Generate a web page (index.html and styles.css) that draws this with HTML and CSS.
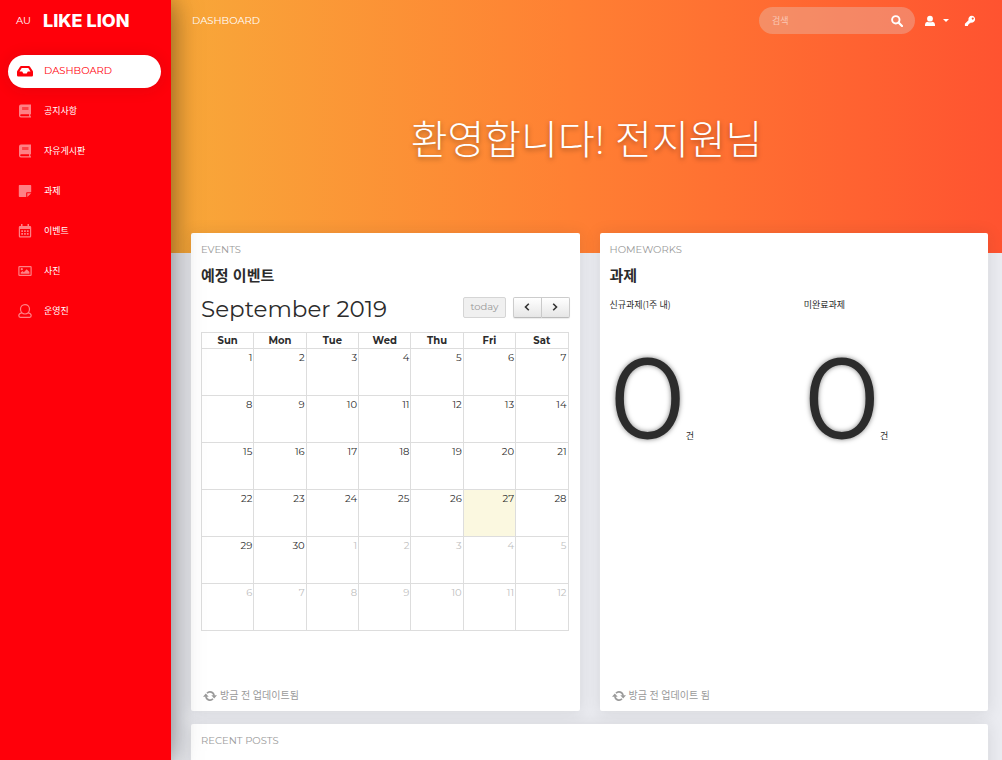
FILE: index.html
```html
<!DOCTYPE html>
<html lang="ko">
<head>
<meta charset="utf-8">
<meta name="viewport" content="width=device-width, initial-scale=1">
<title>LIKE LION Dashboard</title>
<link rel="stylesheet" href="styles.css">
</head>
<body>
<div class="app">
  <aside class="sidebar">
    <div class="brand"><a class="brand-mini" href="#">AU</a><a class="brand-name" href="#">LIKE LION</a></div>
    <nav class="menu">
      <a class="menu-item active" href="#">
        <svg class="icon" viewBox="0 0 16 16"><path fill-rule="evenodd" d="M4.200 3h7.600q.8 0 1.200.7l2.600 4.100q.4.600.4 1.200v3.300q0 1.200-1.200 1.200H1.200Q0 13.500 0 12.300V9q0-.6.400-1.200L3 3.700Q3.400 3 4.200 3zM4.700 5 2.500 8.500h2.700L6.300 10.500h3.400l1.100-2h2.700L11.300 5z"/></svg>
        <span>DASHBOARD</span></a>
      <a class="menu-item" href="#">
        <svg class="icon" viewBox="0 0 16 16"><path fill-rule="evenodd" d="M4 1.500h10v9.800h-.7v2h.7v1.200H4Q2 14.500 2 12.500v-9Q2 1.500 4 1.500zM5.300 4v3h6V4zM4.200 11.300q-1 0-1 1t1 1h7.900v-2z"/><path opacity=".5" d="M5.300 4h6v3h-6z"/></svg>
        <span>공지사항</span></a>
      <a class="menu-item" href="#">
        <svg class="icon" viewBox="0 0 16 16"><path fill-rule="evenodd" d="M4 1.500h10v9.800h-.7v2h.7v1.200H4Q2 14.500 2 12.500v-9Q2 1.500 4 1.500zM5.300 4v3h6V4zM4.200 11.300q-1 0-1 1t1 1h7.900v-2z"/><path opacity=".5" d="M5.300 4h6v3h-6z"/></svg>
        <span>자유게시판</span></a>
      <a class="menu-item" href="#">
        <svg class="icon" viewBox="0 0 16 16"><path d="M2.500 2h11q.7 0 .7.700v6.500H10q-.8 0-.8.800v4H2.500q-.7 0-.7-.7V2.700q0-.7.700-.7zM10.300 10.300h3.900L10.300 14z"/></svg>
        <span>과제</span></a>
      <a class="menu-item" href="#">
        <svg class="icon" viewBox="0 0 16 16"><path fill-rule="evenodd" d="M4 1h1.500v2h5V1H12v2h1q1.200 0 1.200 1.200v9.100q0 1.200-1.200 1.200H3q-1.200 0-1.200-1.200V4.200Q1.800 3 3 3h1zM3 6v7.300h10V6z"/><path d="M4.300 7.200h1.700v1.700H4.300zm2.800 0h1.700v1.700H7.100zm2.800 0h1.700v1.700H9.900zM4.300 10h1.700v1.700H4.300zm2.800 0h1.700v1.700H7.100zM9.900 10h1.700v1.700H9.900z"/></svg>
        <span>이벤트</span></a>
      <a class="menu-item" href="#">
        <svg class="icon" viewBox="0 0 16 16"><path fill-rule="evenodd" d="M2.500 3h11q1.200 0 1.200 1.200v7.600q0 1.200-1.200 1.200h-11q-1.200 0-1.200-1.200V4.200Q1.300 3 2.500 3zm0 1.200v7.600h11V4.200z"/><circle cx="4.800" cy="6.200" r="1.100"/><path d="M3.700 10.800V9.500L5.500 8l1.300 1.200 2.900-3 2.700 2.700v1.900z"/></svg>
        <span>사진</span></a>
      <a class="menu-item" href="#">
        <svg class="icon icon-line" viewBox="0 0 16 16"><path d="M8 1.600c2.700 0 4.500 2 4.500 4.500S10.700 11 8 11 3.500 8.600 3.500 6.100 5.300 1.600 8 1.600zM4.800 9.800q-3 .6-3 2.800 0 1.700 1.500 1.700h9.400q1.500 0 1.500-1.700 0-2.200-3-2.800"/></svg>
        <span>운영진</span></a>
    </nav>
  </aside>
  <main class="main">
    <header class="hero">
      <div class="navbar">
        <a class="page-name" href="#">DASHBOARD</a>
        <div class="tools">
          <form class="search">
            <input type="text" aria-label="검색" placeholder="검색">
            <button type="button" aria-label="검색 실행"><svg class="glyph" viewBox="0 0 12 12"><circle cx="4.800" cy="4.800" r="3.700" fill="none" stroke="currentColor" stroke-width="1.900"/><path d="m7.500 7.500 3.500 3.500" stroke="currentColor" stroke-width="2.200" stroke-linecap="round"/></svg></button>
          </form>
          <button class="user" type="button" aria-label="사용자 메뉴"><svg class="glyph" viewBox="0 0 12 12"><circle cx="6" cy="3.700" r="2.900"/><path d="M3.300 6.700Q6 8 8.700 6.700q2.300.3 2.300 3.100V11H1V9.800Q1 7 3.300 6.700z"/></svg><span class="caret"></span></button>
          <a class="key" href="#" aria-label="로그인"><svg class="glyph" viewBox="0 0 12 12"><path fill-rule="evenodd" d="M7.800.7a3.500 3.500 0 1 1-1 6.900L6 8.500H5v1H4v1.200q0 .4-.4.400H1.300q-.4 0-.4-.4V8.800L4.500 5.200A3.500 3.500 0 0 1 7.800.7zm.9 1.700a1 1 0 1 0 .1 0z"/></svg></a>
        </div>
      </div>
      <h1 class="welcome">환영합니다! 전지원님</h1>
    </header>
    <div class="content">
      <section class="card tall">
        <p class="category">EVENTS</p>
        <h2 class="card-title">예정 이벤트</h2>
        <div class="cal-bar">
          <h3 class="month">September 2019</h3>
          <div class="cal-actions">
            <button class="cal-btn today-btn" type="button" disabled>today</button>
            <div class="cal-group">
              <button class="cal-btn" type="button" aria-label="이전 달"><svg class="chev" viewBox="0 0 8 8"><path d="M5.800.8 2.500 4l3.300 3.200"/></svg></button>
              <button class="cal-btn" type="button" aria-label="다음 달"><svg class="chev" viewBox="0 0 8 8"><path d="M2.200.8 5.500 4 2.200 7.200"/></svg></button>
            </div>
          </div>
        </div>
        <table class="calendar">
          <thead><tr><th>Sun</th><th>Mon</th><th>Tue</th><th>Wed</th><th>Thu</th><th>Fri</th><th>Sat</th></tr></thead>
          <tbody>
            <tr><td>1</td><td>2</td><td>3</td><td>4</td><td>5</td><td>6</td><td>7</td></tr>
            <tr><td>8</td><td>9</td><td>10</td><td>11</td><td>12</td><td>13</td><td>14</td></tr>
            <tr><td>15</td><td>16</td><td>17</td><td>18</td><td>19</td><td>20</td><td>21</td></tr>
            <tr><td>22</td><td>23</td><td>24</td><td>25</td><td>26</td><td class="today">27</td><td>28</td></tr>
            <tr><td>29</td><td>30</td><td class="other">1</td><td class="other">2</td><td class="other">3</td><td class="other">4</td><td class="other">5</td></tr>
            <tr><td class="other">6</td><td class="other">7</td><td class="other">8</td><td class="other">9</td><td class="other">10</td><td class="other">11</td><td class="other">12</td></tr>
          </tbody>
        </table>
        <p class="updated"><svg class="sync" viewBox="0 0 14 12"><path class="arc" d="M4 3.200a4 4 0 0 1 7 2.600M10 8.800a4 4 0 0 1-7-2.600"/><path d="M8.300 5.300H14L11.200 8.500zM0 6.700h5.700L2.800 3.500z"/></svg>방금 전 업데이트됨</p>
      </section>
      <section class="card tall">
        <p class="category">HOMEWORKS</p>
        <h2 class="card-title">과제</h2>
        <div class="stats">
          <div class="stat"><p class="label">신규과제(1주 내)</p><p class="count"><span class="number">0</span>건</p></div>
          <div class="stat"><p class="label">미완료과제</p><p class="count"><span class="number">0</span>건</p></div>
        </div>
        <p class="updated"><svg class="sync" viewBox="0 0 14 12"><path class="arc" d="M4 3.200a4 4 0 0 1 7 2.600M10 8.800a4 4 0 0 1-7-2.600"/><path d="M8.300 5.300H14L11.200 8.500zM0 6.700h5.700L2.800 3.500z"/></svg>방금 전 업데이트 됨</p>
      </section>
      <section class="card posts">
        <p class="category">RECENT POSTS</p>
      </section>
    </div>
  </main>
</div>
</body>
</html>
```
FILE: styles.css
```css
* { box-sizing: border-box; }
body {
  margin: 0;
  background: #ebecf1;
  color: #2c2c2c;
  font: 10px/16px Montserrat, Inter, "Noto Sans CJK KR", sans-serif;
}
h1, h2, h3, p { margin: 0; }
a { color: inherit; text-decoration: none; }
button, input { margin: 0; border: 0; padding: 0; background: none; color: inherit; font: inherit; }
svg { display: block; fill: currentColor; }

.app { display: flex; height: 100vh; }

.sidebar {
  flex: 0 0 171px;
  z-index: 1;
  background: #ff000a;
  color: #fff;
  box-shadow: 0 2px 22px rgba(0, 0, 0, .2), 0 2px 30px rgba(0, 0, 0, .35);
}
.brand { display: flex; align-items: center; gap: 12px; height: 41px; padding-left: 16px; }
.brand-name { font-family: Inter, sans-serif; font-size: 18px; font-weight: 800; }
.menu { display: grid; gap: 7px; padding: 14px 10px 0 8px; }
.menu-item {
  display: flex;
  align-items: center;
  gap: 11px;
  height: 33px;
  padding: 0 8px 2px 9px;
  border-radius: 17px;
  font-size: 9px;
}
.icon { width: 16px; height: 16px; opacity: .5; }
.menu-item.active { background: #fff; color: #ff000a; font-size: 10px; box-shadow: 0 1px 15px 1px rgba(39, 39, 39, .1); }
.active .icon { opacity: 1; }
.icon-line { fill: none; stroke: currentColor; stroke-width: 1.200; }

.main { flex: 1; min-width: 0; overflow-y: auto; scrollbar-width: none; }
.hero {
  height: 253px;
  background: linear-gradient(to right, #f8a839 0%, #ff8033 48%, #ff5330 100%);
  color: #fff;
}
.navbar { display: flex; align-items: center; justify-content: space-between; height: 41px; padding: 0 26px 0 21px; }
.tools { display: flex; align-items: center; }
.search {
  display: flex;
  align-items: center;
  width: 156px;
  height: 27px;
  padding: 0 12px 0 13px;
  border-radius: 14px;
  background: rgba(222, 222, 222, .3);
}
.search input { flex: 1; min-width: 0; outline: 0; font-size: 9px; }
.search input::placeholder { color: #fff; opacity: .5; }
.glyph { width: 12px; height: 12px; }
.user { display: flex; align-items: center; gap: 7px; margin: 0 15px 0 9px; }
.caret { border: 3px solid transparent; border-top-color: #fff; border-bottom: 0; }
.welcome {
  margin-top: 69px;
  text-align: center;
  font-size: 40px;
  line-height: 60px;
  font-weight: 300;
  text-shadow: 0 2px 5px rgba(0, 0, 0, .35);
}

.content {
  display: grid;
  grid-template-columns: 1fr 1fr;
  gap: 13px 20px;
  margin-top: -20px;
  padding: 0 14px 20px 20px;
}
.card {
  display: flex;
  flex-direction: column;
  padding: 9px 10px 7px;
  border-radius: 2px;
  background: #fff;
  box-shadow: 0 1px 15px 1px rgba(39, 39, 39, .1);
}
.tall { min-height: 478px; }
.posts { grid-column: 1 / -1; min-height: 240px; }
.category { color: #9a9a9a; }
.card-title { margin-top: 5px; font-size: 15px; line-height: 26px; font-weight: 700; }

.cal-bar { display: flex; align-items: center; justify-content: space-between; height: 40px; margin-bottom: 3px; }
.month { font-size: 23px; line-height: 30px; font-weight: 400; }
.cal-actions { display: flex; gap: 7px; padding-bottom: 4px; }
.cal-btn {
  height: 21px;
  min-width: 28px;
  border: 1px solid #ccc;
  border-bottom-color: #bbb;
  border-radius: 2px;
  background: linear-gradient(#fff, #e6e6e6);
  box-shadow: 0 1px 1px rgba(0, 0, 0, .08);
}
.today-btn { padding: 0 6px; border-color: #d5d5d5; background: #f0f0f0; color: #999; box-shadow: none; }
.cal-group { display: flex; }
.cal-group .cal-btn:first-child { min-width: 29px; border-radius: 2px 0 0 2px; }
.cal-group .cal-btn:last-child { border-left: 0; border-radius: 0 2px 2px 0; }
.chev { width: 8px; height: 8px; margin: auto; fill: none; stroke: #333; stroke-width: 1.600; }

.calendar { width: calc(100% - 1px); border-collapse: collapse; table-layout: fixed; }
.calendar th, .calendar td { border: 1px solid #ddd; padding: 0 1px; }
.calendar th { height: 16px; line-height: 15px; font-weight: 700; }
.calendar td { height: 47px; padding-top: 1px; vertical-align: top; text-align: right; }
.calendar .today { background: #fbf8e0; }
.calendar .other { color: #c0c0c0; }

.updated { display: flex; align-items: center; gap: 3px; margin-top: auto; padding-left: 2px; color: #9a9a9a; }
.sync { width: 14px; height: 12px; }
.arc { fill: none; stroke: currentColor; stroke-width: 1.700; }

.stats { display: grid; grid-template-columns: 1fr 1fr; gap: 20px; margin-top: 8px; font-size: 9px; }
.count { margin-top: 15px; white-space: nowrap; }
.number { font-size: 115px; line-height: 140px; font-weight: 400; text-shadow: 0 0 5px rgba(0, 0, 0, .5); }
```
